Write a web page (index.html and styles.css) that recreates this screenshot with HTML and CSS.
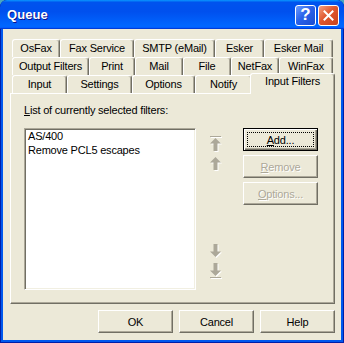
FILE: index.html
```html
<!DOCTYPE html>
<html>
<head>
<meta charset="utf-8">
<title>Queue</title>
<link rel="stylesheet" href="styles.css">
</head>
<body>
<div class="window">
  <div class="titlebar">
    <span class="title">Queue</span>
    <div class="tb-btns">
      <div class="tb-btn help">?</div>
      <div class="tb-btn close">
        <svg width="11" height="11" viewBox="0 0 11 11"><path d="M1.5 1.5 L9.5 9.5 M9.5 1.5 L1.5 9.5" stroke="#fff" stroke-width="2" stroke-linecap="square"/></svg>
      </div>
    </div>
  </div>
  <div class="client">
    <div class="tabs">
      <div class="tab-row">
        <div class="tab t-osfax">OsFax</div>
        <div class="tab t-faxservice">Fax Service</div>
        <div class="tab t-smtp">SMTP (eMail)</div>
        <div class="tab t-esker">Esker</div>
        <div class="tab t-eskermail">Esker Mail</div>
      </div>
      <div class="tab-row">
        <div class="tab t-outputfilters">Output Filters</div>
        <div class="tab t-print">Print</div>
        <div class="tab t-mail">Mail</div>
        <div class="tab t-file">File</div>
        <div class="tab t-netfax">NetFax</div>
        <div class="tab t-winfax">WinFax</div>
      </div>
      <div class="tab-row">
        <div class="tab t-input">Input</div>
        <div class="tab t-settings">Settings</div>
        <div class="tab t-options">Options</div>
        <div class="tab t-notify">Notify</div>
        <div class="tab t-inputfilters selected">Input Filters</div>
      </div>
    </div>
    <div class="panel">
      <div class="label"><u>L</u>ist of currently selected filters:</div>
      <div class="panel-body">
        <div class="listbox">
          <div class="item">AS/400</div>
          <div class="item">Remove PCL5 escapes</div>
        </div>
        <div class="arrows">
          <div class="arrow-group">
            <svg width="12" height="17" viewBox="0 0 12 17">
              <g fill="#fff" transform="translate(1,1)"><rect x="0" y="0" width="11" height="1"/><polygon points="5.5,2 11,7.5 7.5,7.5 7.5,15 3.5,15 3.5,7.5 0,7.5"/></g>
              <g fill="#ACA899"><rect x="0" y="0" width="11" height="1"/><polygon points="5.5,2 11,7.5 7.5,7.5 7.5,15 3.5,15 3.5,7.5 0,7.5"/></g>
            </svg>
            <svg width="12" height="15" viewBox="0 0 12 15">
              <polygon fill="#fff" transform="translate(1,1)" points="5.5,0 11,5.5 7.5,5.5 7.5,13 3.5,13 3.5,5.5 0,5.5"/>
              <polygon fill="#ACA899" points="5.5,0 11,5.5 7.5,5.5 7.5,13 3.5,13 3.5,5.5 0,5.5"/>
            </svg>
          </div>
          <div class="arrow-group">
            <svg width="12" height="15" viewBox="0 0 12 15">
              <polygon fill="#fff" transform="translate(1,1)" points="3.5,0 7.5,0 7.5,7.5 11,7.5 5.5,13 0,7.5 3.5,7.5"/>
              <polygon fill="#ACA899" points="3.5,0 7.5,0 7.5,7.5 11,7.5 5.5,13 0,7.5 3.5,7.5"/>
            </svg>
            <svg width="12" height="17" viewBox="0 0 12 17">
              <g fill="#fff" transform="translate(1,1)"><polygon points="3.5,0 7.5,0 7.5,7.5 11,7.5 5.5,13 0,7.5 3.5,7.5"/><rect x="0" y="14" width="11" height="1"/></g>
              <g fill="#ACA899"><polygon points="3.5,0 7.5,0 7.5,7.5 11,7.5 5.5,13 0,7.5 3.5,7.5"/><rect x="0" y="14" width="11" height="1"/></g>
            </svg>
          </div>
        </div>
        <div class="side-buttons">
          <button class="btn default"><u>A</u>dd...</button>
          <button class="btn disabled"><u>R</u>emove</button>
          <button class="btn disabled"><u>O</u>ptions...</button>
        </div>
      </div>
    </div>
    <div class="footer">
      <button class="btn">OK</button>
      <button class="btn">Cancel</button>
      <button class="btn">Help</button>
    </div>
  </div>
</div>
</body>
</html>
```
FILE: styles.css
```css
* { box-sizing: border-box; }
html, body { margin: 0; padding: 0; }
body {
  width: 344px;
  height: 343px;
  background: #4aa6bf;
  font-family: "Liberation Sans", Arial, sans-serif;
  font-size: 11px;
  letter-spacing: -0.2px;
  color: #000;
  overflow: hidden;
}
.window {
  width: 344px;
  height: 343px;
  display: flex;
  flex-direction: column;
  background: #0058EE;
  border-radius: 7px 7px 0 0;
  overflow: hidden;
  box-shadow: inset 1px 0 #001EA8, inset -1px 0 #001EA8, inset 0 -1px #001EA8;
}
.titlebar {
  height: 29px;
  flex: none;
  display: flex;
  align-items: center;
  justify-content: space-between;
  padding: 0 5px 0 7px;
  border-radius: 7px 7px 0 0;
  background: linear-gradient(180deg, #0997ff, #0053ee 8%, #0050ee 40%, #0066ff 88%, #0066ff 93%, #005bff 95%, #003dd7 96%, #003dd7);
}
.title {
  color: #fff;
  font-weight: bold;
  font-size: 13px;
  letter-spacing: 0.1px;
  text-shadow: 1px 1px #0F1089;
}
.tb-btns { display: flex; gap: 2px; margin-top: 1px; }
.tb-btn {
  width: 21px;
  height: 21px;
  border: 1px solid #fff;
  border-radius: 3px;
  display: flex;
  align-items: center;
  justify-content: center;
}
.help {
  background: linear-gradient(135deg, #6b9bff, #2a62ea 45%, #1c4cd0);
  color: #fff;
  font-weight: bold;
  font-size: 17px;
  letter-spacing: 0;
}
.close {
  background: linear-gradient(135deg, #f4a080, #e0572f 45%, #c9421c);
}
.client {
  flex: 1;
  margin: 0 3px 3px;
  background: #ECE9D8;
  display: flex;
  flex-direction: column;
  padding: 10px 6px 0 7px;
}
.tabs { margin: 0 2px; display: flex; flex-direction: column; }
.tab-row { display: flex; height: 18px; }
.tab {
  flex: 0 0 auto;
  text-align: center;
  white-space: nowrap;
  line-height: 17px;
  padding: 0;
  border-top: 1px solid #fff;
  border-left: 1px solid #fff;
  border-right: 1px solid #716F64;
  border-radius: 3px 3px 0 0;
  box-shadow: inset -1px 0 #ACA899;
}
.t-osfax { width: 48px; }
.t-faxservice { width: 74px; }
.t-smtp { width: 81px; }
.t-esker { width: 49px; }
.t-eskermail { width: 69px; }
.t-outputfilters { width: 77px; }
.t-print { width: 46px; }
.t-mail { width: 48px; }
.t-file { width: 48px; }
.t-netfax { width: 48px; }
.t-winfax { width: 54px; }
.t-input { width: 55px; }
.t-settings { width: 65px; }
.t-options { width: 63px; }
.t-notify { width: 57px; }
.t-inputfilters { width: 85px; }
.tab.selected {
  position: relative;
  z-index: 1;
  align-self: flex-start;
  height: 21px;
  margin: -2px -2px 0 -2px;
  line-height: 15px;
  background: #ECE9D8;
}
.panel {
  height: 211px;
  flex: none;
  border: 1px solid;
  border-color: #fff #716F64 #716F64 #fff;
  box-shadow: inset -1px -1px #ACA899;
  padding: 10px 0 0 13px;
}
.label { line-height: 13px; height: 13px; }
.panel-body { display: flex; margin-top: 11px; }
.listbox {
  width: 172px;
  height: 162px;
  background: #fff;
  border: 1px solid;
  border-color: #ACA899 #fff #fff #ACA899;
  box-shadow: inset 1px 1px #716F64, inset -1px -1px #F1EFE2;
  padding: 0 3px;
}
.item { line-height: 14px; white-space: nowrap; }
.arrows {
  margin-left: 14px;
  width: 12px;
  display: flex;
  flex-direction: column;
  justify-content: space-between;
  padding: 8px 0 10px;
}
.arrow-group { display: flex; flex-direction: column; gap: 4px; }
.arrow-group svg { display: block; }
.side-buttons {
  margin-left: 21px;
  display: flex;
  flex-direction: column;
  gap: 4px;
}
.btn {
  width: 75px;
  height: 23px;
  font: inherit;
  letter-spacing: inherit;
  background: #ECE9D8;
  color: #000;
  border: 1px solid;
  border-color: #fff #716F64 #716F64 #fff;
  box-shadow: inset -1px -1px #ACA899;
  border-radius: 0;
  padding: 0;
  text-align: center;
}
.btn.default {
  border-color: #000;
  box-shadow: inset 1px 1px #fff, inset -1px -1px #716F64, inset -2px -2px #ACA899;
  outline: 1px dotted #000;
  outline-offset: -5px;
}
.btn.disabled {
  color: #ACA899;
  text-shadow: 1px 1px #fff;
}
.footer {
  display: flex;
  justify-content: flex-end;
  gap: 6px;
  margin-top: 6px;
}
```
